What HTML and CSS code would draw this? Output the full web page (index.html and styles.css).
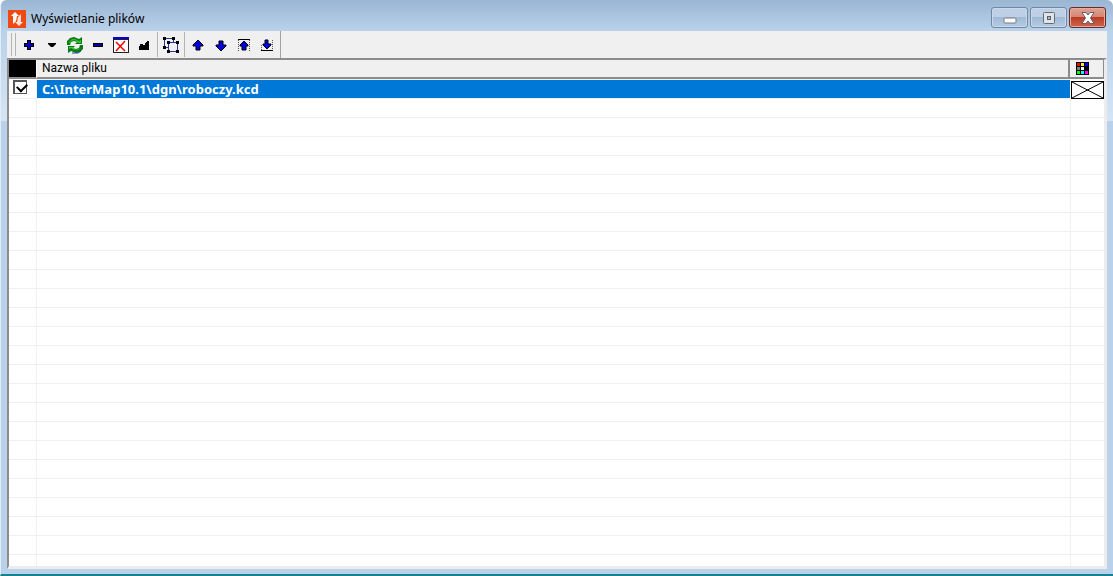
FILE: index.html
```html
<!DOCTYPE html>
<html lang="pl">
<head>
    <meta charset="utf-8">
    <title>Wyświetlanie plików</title>
    <link rel="stylesheet" href="styles.css">
</head>
<body>
    <div class="window">
        <header class="titlebar">
            <svg class="app-icon" width="18" height="18" viewBox="0 0 18 18">
                <rect width="18" height="18" fill="#ee4a12"/>
                <path d="M7 2l4 4H9l-1 5-3 3V6H3z" fill="#fff"/>
                <path d="M11 16l-4-4h2l1-5 3-3v8h2z" fill="#ffe3d8"/>
            </svg>
            <h1>Wyświetlanie plików</h1>
            <div class="window-buttons">
                <button class="win-btn" aria-label="Minimalizuj">
                    <svg width="14" height="12" viewBox="0 0 14 12"><rect x="1" y="6" width="12" height="5" rx="1" fill="#fff" stroke="#777b83"/></svg>
                </button>
                <button class="win-btn" aria-label="Maksymalizuj">
                    <svg width="14" height="12" viewBox="0 0 14 12"><rect x="1.500" y=".5" width="11" height="11" rx="1" fill="#e2e3e5" stroke="#666a72"/><rect x="5.500" y="4.500" width="3" height="3" fill="#a9bed4" stroke="#56606c"/></svg>
                </button>
                <button class="win-btn close" aria-label="Zamknij">
                    <svg width="14" height="12" viewBox="0 0 14 12"><path d="M1 .5h4l2 2.500 2-2.500h4L9.500 6l3.500 5.500H9L7 9l-2 2.500H1L4.500 6z" fill="#fff" stroke="#665d67"/></svg>
                </button>
            </div>
        </header>

        <main class="content">
            <div class="toolbar">
                <span class="grip"></span>
                <button aria-label="Dodaj">
                    <svg width="18" height="18" viewBox="0 0 18 18"><path d="M7 4h4v3h3v4h-3v3H7v-3H4V7h3z" fill="#000"/><path d="M8 5h2v3h3v2h-3v3H8v-3H5V8h3z" fill="#0000c8"/></svg>
                </button>
                <button aria-label="Lista">
                    <svg width="18" height="18" viewBox="0 0 18 18"><path d="M5 7h8v1l-3 3H8L5 8z" fill="#000"/></svg>
                </button>
                <button aria-label="Odśwież">
                    <svg width="18" height="18" viewBox="0 0 18 18">
                        <path d="M1 9V5l3-3 4-1 5 2 3-2v7H9l2-2-3-1-3 1-1 3z" fill="#087b16"/>
                        <path d="M3 6l3-3h3l4 2 2-1v3h-3L9 4 5 5 3 8z" fill="#39be2c"/>
                        <path d="M17 9v4l-3 3-4 1-5-2-3 2v-7h7l-2 2 3 1 3-1 1-3z" fill="#087b16"/>
                        <path d="M15 12l-3 2H9l-4-2-2 1v-2h4l3 3 3-1z" fill="#48cf38"/>
                        <path d="M6 17h6l3-2" fill="none" stroke="#174b9b"/>
                    </svg>
                </button>
                <button aria-label="Usuń">
                    <svg width="18" height="18" viewBox="0 0 18 18"><path d="M4 7h10v4H4z" fill="#000"/><path d="M5 8h8v2H5z" fill="#0000a8"/></svg>
                </button>
                <button aria-label="Zamknij okno">
                    <svg width="18" height="18" viewBox="0 0 18 18"><path d="M1 1h16v16H1z" fill="#222"/><path d="M2 4h14v12H2z" fill="#fff"/><path d="M1 1h16v2H1z" fill="#0000e8"/><path d="M4 6l9 9M13 5l-9 10" stroke="#f00000" stroke-width="1.500"/></svg>
                </button>
                <button aria-label="Raster">
                    <svg width="18" height="18" viewBox="0 0 18 18"><path d="M4 14v-4h1V8h3v1h2V7h1V6h1V5h2v9z" fill="#000"/></svg>
                </button>
                <span class="separator"></span>
                <button aria-label="Grupa">
                    <svg width="18" height="18" viewBox="0 0 18 18">
                        <path d="M2.500 2.500h9v9h-9z" fill="none" stroke="#303099"/>
                        <path d="M6.500 6.500h9v9h-9z" fill="#f0f0f0" stroke="#303099"/>
                        <path d="M1 1h3v3H1zM10 1h3v3h-3zM1 10h3v3H1zM5 5h3v3H5zM14 5h3v3h-3zM5 14h3v3H5zM14 14h3v3h-3z" fill="#000"/>
                    </svg>
                </button>
                <span class="separator"></span>
                <button aria-label="W górę">
                    <svg width="18" height="18" viewBox="0 0 18 18"><path d="M9 4l5 5v1h-3v4H7v-4H4V9z" fill="#0000e0" stroke="#000"/></svg>
                </button>
                <button aria-label="W dół">
                    <svg width="18" height="18" viewBox="0 0 18 18"><path d="M9 15l-5-5V9h3V5h4v4h3v1z" fill="#0000e0" stroke="#000"/></svg>
                </button>
                <button aria-label="Na początek">
                    <svg width="18" height="18" viewBox="0 0 18 18"><path d="M3 3.500h12" stroke="#000"/><path d="M3.500 4v11M14.500 4v11" stroke="#555" stroke-dasharray="1 1"/><path d="M9 5l4 4v1h-2v4H7v-4H5V9z" fill="#0000e0" stroke="#000"/></svg>
                </button>
                <button aria-label="Na koniec">
                    <svg width="18" height="18" viewBox="0 0 18 18"><path d="M3 14.500h12" stroke="#000"/><path d="M3.500 9v5M14.500 4v10" stroke="#555" stroke-dasharray="1 1"/><path d="M9 13L5 9V8h2V4h3v4h3v1z" fill="#0000e0" stroke="#000"/></svg>
                </button>
            </div>

            <div class="list">
                <table>
                    <thead>
                        <tr>
                            <th class="col-check"></th>
                            <th class="col-name">Nazwa pliku</th>
                            <th class="col-color">
                                <svg width="13" height="13" viewBox="0 0 13 13" aria-label="Kolor">
                                    <rect width="13" height="13" fill="#000"/>
                                    <path d="M1 1h3v3H1z" fill="#f00"/><path d="M5 1h3v3H5z" fill="#ff0"/><path d="M9 1h3v3H9z" fill="#00f"/>
                                    <path d="M1 5h3v3H1z" fill="#808080"/><path d="M5 5h3v3H5z" fill="#fff"/>
                                    <path d="M1 9h3v3H1z" fill="#0f0"/><path d="M5 9h3v3H5z" fill="#0ff"/><path d="M9 9h3v3H9z" fill="#f0f"/>
                                </svg>
                            </th>
                        </tr>
                    </thead>
                    <tbody>
                        <tr>
                            <td class="col-check"><input type="checkbox" id="file1" checked></td>
                            <td class="col-name selected"><label for="file1">C:\InterMap10.1\dgn\roboczy.kcd</label></td>
                            <td class="col-color">
                                <svg class="no-color" width="33" height="18" viewBox="0 0 33 18"><rect x=".5" y=".5" width="32" height="17" fill="#fff" stroke="#000"/><path d="M1 1l31 16M32 1L1 17" stroke="#000"/></svg>
                            </td>
                        </tr>
                    </tbody>
                </table>
                <div class="empty-rows">
                    <span class="empty-check"></span>
                    <span class="empty-name"></span>
                    <span class="empty-color"></span>
                </div>
            </div>
        </main>
    </div>
</body>
</html>
```
FILE: styles.css
```css
* {
    box-sizing: border-box;
}
body {
    margin: 0;
    font-family: "Noto Sans", "Open Sans", sans-serif;
    font-size: 12px;
    color: #000;
}
button {
    padding: 0;
    border: none;
    background: none;
}
svg {
    display: block;
}
.window {
    display: flex;
    flex-direction: column;
    height: 100vh;
    padding: 0 6px 5px 7px;
    background: linear-gradient(#9bb6d3, #b9d1ea 30px, #d6e5f5 121px, #b9d1ea 121px);
    border-bottom: 2px solid #15838f;
    border-left: 1px solid #e4edf6;
    border-top-left-radius: 6px;
    border-top-right-radius: 6px;
}

/* title bar */
.titlebar {
    display: flex;
    align-items: center;
    height: 31px;
    flex: none;
    padding-top: 6px;
}
.titlebar h1 {
    flex: 1;
    margin: 0 0 0 5px;
    font-size: 12px;
    font-weight: normal;
}
.window-buttons {
    display: flex;
    align-self: flex-start;
    gap: 2px;
    padding: 1px 1px 0 0;
}
.win-btn {
    display: flex;
    align-items: center;
    justify-content: center;
    width: 37px;
    height: 21px;
    border: 1px solid #7188a3;
    border-radius: 3px;
    background: linear-gradient(#bdd0e5 50%, #a1bad6 50%, #b4cbe4);
    box-shadow: inset 0 0 0 1px #c9d9ea;
}
.win-btn.close {
    border-color: #662b2b;
    background: linear-gradient(#e2a293, #d58370 50%, #b93b25 50%, #cd6650);
    box-shadow: inset 0 0 0 1px #e5ad9f;
}

/* toolbar */
.content {
    display: flex;
    flex: 1;
    flex-direction: column;
    min-height: 0;
    margin-left: -1px;
    background: #f0f0f0;
}
.toolbar {
    display: flex;
    align-items: center;
    align-self: flex-start;
    gap: 5px;
    height: 27px;
    padding: 0 4px;
    border-right: 1px solid #a0a0a0;
}
.grip {
    width: 5px;
    height: 23px;
    margin-right: -1px;
    border: solid #b4b4b4;
    border-width: 0 1px;
}
.separator {
    width: 1px;
    height: 25px;
    margin: 0 -1px;
    background: #b4b4b4;
}

/* file list */
.list {
    display: flex;
    flex: 1;
    flex-direction: column;
    min-height: 0;
    background: #fff;
    border: 2px solid #8c8c8c;
    border-right: 3px solid #ececec;
    border-bottom: 3px solid #ececec;
}
table {
    width: 100%;
    table-layout: fixed;
    border-collapse: separate;
    border-spacing: 0;
}
th,
td {
    height: 19px;
    padding: 0;
    line-height: 17px;
    text-align: left;
    white-space: nowrap;
}
th {
    font-family: Roboto, "Noto Sans", sans-serif;
    font-weight: normal;
    background: #f0f0f0;
    border-bottom: 2px solid #8c8c8c;
}
.col-check {
    width: 28px;
}
th.col-check {
    background: #000;
    border-right: 1px solid #fff;
}
.col-name {
    padding-left: 5px;
}
th.col-name {
    border-right: 2px solid #8c8c8c;
}
.col-color {
    width: 34px;
}
th.col-color {
    padding-left: 6px;
    border-right: 1px solid #8c8c8c;
}
td {
    height: 20px;
}
td.col-check {
    vertical-align: top;
    border-right: 1px solid #f0f0f0;
    border-bottom: 1px solid #f0f0f0;
}
td.selected {
    font-size: 13px;
    font-weight: bold;
    color: #fff;
    background: #0078d7;
    border-top: 1px solid #f0f0f0;
    border-bottom: 1px solid #f0f0f0;
}
td.col-color {
    padding: 1px 0 0 1px;
}
td label {
    display: block;
}
input[type="checkbox"] {
    appearance: none;
    display: block;
    width: 14px;
    height: 14px;
    margin: 1px 0 0 4px;
    border: 2px solid #555;
    border-right-width: 1px;
    border-bottom-width: 1px;
    background: #fff;
}
input[type="checkbox"]:checked::before {
    content: "";
    display: block;
    width: 8px;
    height: 5px;
    margin: 1px 0 0 2px;
    border: solid #000;
    border-width: 0 0 2px 2px;
    transform: rotate(-45deg);
}
.empty-rows {
    display: flex;
    flex: 1;
    background: repeating-linear-gradient(#fff 0, #fff 18px, #f0f0f0 18px, #f0f0f0 19px);
}
.empty-check {
    width: 28px;
    border-right: 1px solid #f0f0f0;
}
.empty-name {
    flex: 1;
}
.empty-color {
    width: 34px;
    border-left: 1px solid #f0f0f0;
}
```
